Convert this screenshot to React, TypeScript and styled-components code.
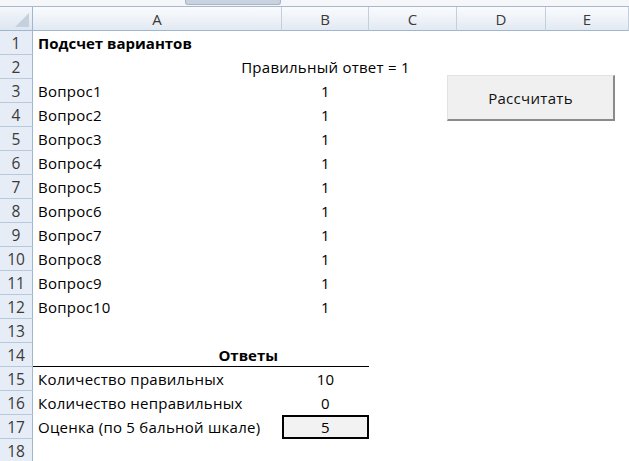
import styled, { createGlobalStyle } from "styled-components";

const GlobalStyle = createGlobalStyle`
  html, body {
    margin: 0;
    padding: 0;
    background: #ffffff;
  }
  body {
    font-family: "Open Sans", "Liberation Sans", Arial, sans-serif;
  }
`;

const COLS = "33px 249px 87px 88px 89px 1fr";
const FONT = `"Open Sans", "Liberation Sans", Arial, sans-serif`;

interface RowData {
  a?: string;
  b?: string;
  aBold?: boolean;
  aRight?: boolean;
  underline?: boolean;
  boxed?: boolean;
}

const rows: RowData[] = [
  { a: "Подсчет вариантов", aBold: true },
  { b: "Правильный ответ = 1" },
  ...Array.from({ length: 10 }, (_, i) => ({ a: `Вопрос${i + 1}`, b: "1" })),
  {},
  { a: "Ответы", aBold: true, aRight: true, underline: true },
  { a: "Количество правильных", b: "10" },
  { a: "Количество неправильных", b: "0" },
  { a: "Оценка (по 5 бальной шкале)", b: "5", boxed: true },
  {},
];

const Page = styled.div`
  position: relative;
  width: 629px;
  height: 461px;
  overflow: hidden;
  background: #ffffff;
  font-family: ${FONT};
`;

const TopStrip = styled.div`
  height: 6px;
  background: #f4f6f9;
  border-bottom: 1px solid #a9b7c9;
  display: flex;
`;

const StripTab = styled.div`
  margin-left: 185px;
  width: 94px;
  height: 4px;
  background: #c9d3e0;
  border: 1px solid #a8b5c6;
  border-top: none;
  border-radius: 0 0 3px 3px;
`;

const HeaderRow = styled.div`
  display: grid;
  grid-template-columns: ${COLS};
  height: 24px;
`;

const Corner = styled.div`
  position: relative;
  background: linear-gradient(#f4f7fb, #dde6f1);
  border-right: 1px solid #9eb6ce;
  border-bottom: 1px solid #9eb6ce;
  &::after {
    content: "";
    position: absolute;
    right: 3px;
    bottom: 3px;
    width: 0;
    height: 0;
    border-left: 14px solid transparent;
    border-bottom: 14px solid #c5d0dd;
  }
`;

const ColHead = styled.div`
  display: flex;
  align-items: center;
  justify-content: center;
  background: linear-gradient(#f9fbfd 0%, #eef2f8 55%, #e2e9f2 100%);
  border-right: 1px solid #c3cfdd;
  border-bottom: 1px solid #9eb6ce;
  font-size: 15px;
  color: #3a3a3a;
`;

const Row = styled.div`
  display: grid;
  grid-template-columns: ${COLS};
  height: 24px;
`;

const RowHead = styled.div`
  display: flex;
  align-items: center;
  justify-content: center;
  background: #e6edf6;
  border-right: 1px solid #9eb6ce;
  border-bottom: 1px solid #b8c9db;
  font-size: 15.5px;
  color: #3a3a3a;
`;

const Cell = styled.div<{
  $bold?: boolean;
  $align?: "left" | "center" | "right";
  $underline?: boolean;
  $boxed?: boolean;
}>`
  display: flex;
  align-items: center;
  justify-content: ${(p) =>
    p.$align === "center" ? "center" : p.$align === "right" ? "flex-end" : "flex-start"};
  padding: 0 ${(p) => (p.$align === "right" ? "4px" : "5px")};
  box-sizing: border-box;
  white-space: nowrap;
  overflow: visible;
  font-size: 15px;
  letter-spacing: ${(p) => (p.$bold ? "0" : "0.25px")};
  font-weight: ${(p) => (p.$bold ? 700 : 400)};
  color: #000000;
  border-bottom: ${(p) => (p.$underline ? "1px solid #000" : "none")};
  ${(p) =>
    p.$boxed &&
    `
    border: 2px solid #000;
    background: #f2f2f2;
  `}
`;

const Button = styled.button`
  position: absolute;
  left: 447px;
  top: 75px;
  width: 168px;
  height: 46px;
  background: #f0f0f0;
  border: 1px solid #e2e2e2;
  border-right: 2px solid #8a8a8a;
  border-bottom: 2px solid #8a8a8a;
  font-family: ${FONT};
  font-size: 15px;
  letter-spacing: 0.3px;
  color: #111111;
  padding: 0;
`;

export default function App() {
  return (
    <Page>
      <GlobalStyle />
      <TopStrip>
        <StripTab />
      </TopStrip>
      <HeaderRow>
        <Corner />
        {["A", "B", "C", "D", "E"].map((c) => (
          <ColHead key={c}>{c}</ColHead>
        ))}
      </HeaderRow>
      {rows.map((r, i) => (
        <Row key={i}>
          <RowHead>{i + 1}</RowHead>
          <Cell $bold={r.aBold} $align={r.aRight ? "right" : "left"} $underline={r.underline}>
            {r.a}
          </Cell>
          <Cell $align="center" $underline={r.underline} $boxed={r.boxed}>
            {r.b}
          </Cell>
          <Cell />
          <Cell />
          <Cell />
        </Row>
      ))}
      <Button>Рассчитать</Button>
    </Page>
  );
}
